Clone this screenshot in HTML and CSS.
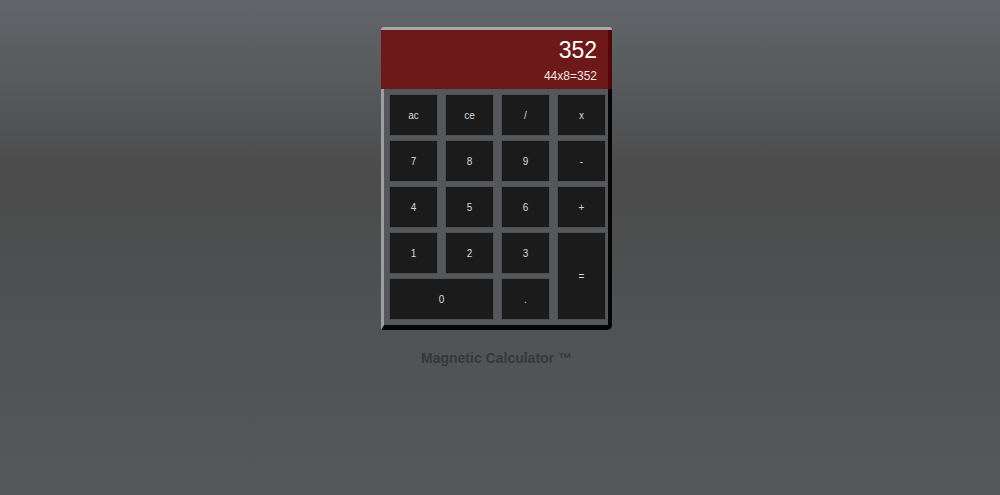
FILE: index.html
```html
<!DOCTYPE html>
<html>
<head>
<meta charset="utf-8">
<link rel="stylesheet" href="styles.css">
</head>
<body>
<div class="page">
  <div class="calc">
    <div class="display">
      <div class="result">352</div>
      <div class="history">44x8=352</div>
    </div>
    <div class="keypad">
      <button class="key">ac</button>
      <button class="key">ce</button>
      <button class="key">/</button>
      <button class="key">x</button>
      <button class="key">7</button>
      <button class="key">8</button>
      <button class="key">9</button>
      <button class="key">-</button>
      <button class="key">4</button>
      <button class="key">5</button>
      <button class="key">6</button>
      <button class="key">+</button>
      <button class="key">1</button>
      <button class="key">2</button>
      <button class="key">3</button>
      <button class="key key-equals">=</button>
      <button class="key key-zero">0</button>
      <button class="key">.</button>
    </div>
  </div>
  <div class="title">Magnetic Calculator ™</div>
</div>
</body>
</html>
```

FILE: styles.css
```css
html, body {
  margin: 0;
  padding: 0;
}
body {
  font-family: "Liberation Sans", Arial, sans-serif;
}
.page {
  min-height: 495px;
  box-sizing: border-box;
  padding: 27px 7px 0 0;
  display: flex;
  flex-direction: column;
  align-items: center;
  background: linear-gradient(180deg, #62666a 0px, #4b4b4b 175px, #55595c 495px);
}
.calc {
  width: 231px;
  border-top: 3px solid #a7a9aa;
  border-radius: 3px 3px 5px 0;
}
.display {
  height: 59px;
  background: #6d1819;
  border-right: 4px solid #520808;
  box-sizing: border-box;
  padding: 7px 11px 0 0;
  color: #fff;
  text-align: right;
}
.result {
  font-size: 23px;
  line-height: 26px;
}
.history {
  font-size: 12px;
  line-height: 14px;
  margin-top: 6px;
  color: #f1e6e6;
}
.keypad {
  background: #55585a;
  border-left: 3px solid #9c9e9f;
  border-right: 4px solid #050505;
  border-bottom: 5px solid #050505;
  border-radius: 0 0 5px 2px;
  padding: 5px 2px 5px 5px;
  display: grid;
  grid-template-columns: repeat(4, 49px);
  grid-template-rows: repeat(5, 42px);
  column-gap: 7px;
  row-gap: 4px;
}
.key {
  margin: 0;
  padding: 0;
  background: #1b1b1b;
  border: 1px solid #4d4f50;
  color: #d9d9d9;
  font-family: "Liberation Sans", Arial, sans-serif;
  font-size: 10px;
}
.key-equals {
  grid-column: 4;
  grid-row: 4 / span 2;
}
.key-zero {
  grid-column: 1 / span 2;
}
.title {
  margin-top: 20px;
  font-size: 14px;
  font-weight: bold;
  color: #35393b;
}
```
